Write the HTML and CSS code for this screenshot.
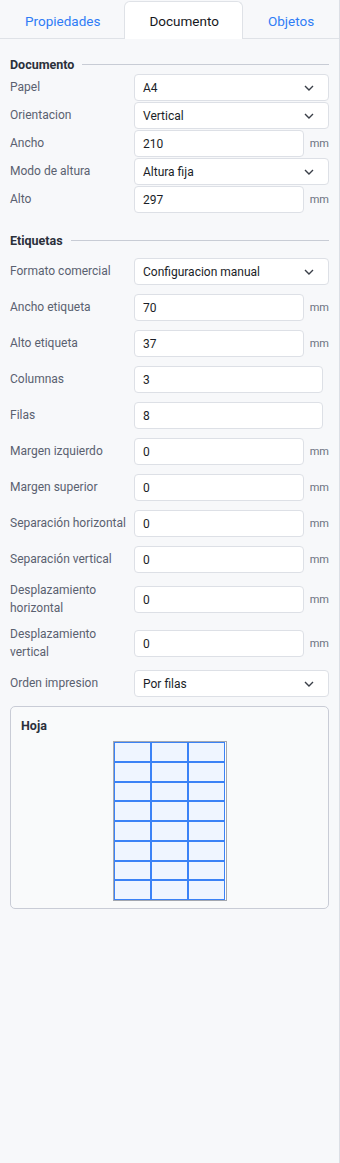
FILE: index.html
```html
<!DOCTYPE html>
<html lang="es">
  <head>
    <meta charset="UTF-8" />
    <meta name="viewport" content="width=device-width, initial-scale=1.0" />
    <title>Documento</title>
    <link rel="stylesheet" href="styles.css">
  </head>
  <body>
    <div class="panel">
      <nav class="tabs">
        <button class="tab">Propiedades</button>
        <button class="tab tab-active">Documento</button>
        <button class="tab">Objetos</button>
      </nav>

      <div class="content">
        <section class="group group-tight">
          <h2 class="group-title">Documento</h2>
          <div class="row">
            <label>Papel</label>
            <div class="select"><span>A4</span><svg viewBox="0 0 10 6" class="chevron"><path d="M1 1l4 4 4-4" /></svg></div>
          </div>
          <div class="row">
            <label>Orientacion</label>
            <div class="select"><span>Vertical</span><svg viewBox="0 0 10 6" class="chevron"><path d="M1 1l4 4 4-4" /></svg></div>
          </div>
          <div class="row">
            <label>Ancho</label>
            <input class="field" type="text" value="210" />
            <span class="unit">mm</span>
          </div>
          <div class="row">
            <label>Modo de altura</label>
            <div class="select"><span>Altura fija</span><svg viewBox="0 0 10 6" class="chevron"><path d="M1 1l4 4 4-4" /></svg></div>
          </div>
          <div class="row">
            <label>Alto</label>
            <input class="field" type="text" value="297" />
            <span class="unit">mm</span>
          </div>
        </section>

        <section class="group">
          <h2 class="group-title">Etiquetas</h2>
          <div class="row">
            <label>Formato comercial</label>
            <div class="select"><span>Configuracion manual</span><svg viewBox="0 0 10 6" class="chevron"><path d="M1 1l4 4 4-4" /></svg></div>
          </div>
          <div class="row">
            <label>Ancho etiqueta</label>
            <input class="field" type="text" value="70" />
            <span class="unit">mm</span>
          </div>
          <div class="row">
            <label>Alto etiqueta</label>
            <input class="field" type="text" value="37" />
            <span class="unit">mm</span>
          </div>
          <div class="row">
            <label>Columnas</label>
            <input class="field field-wide" type="text" value="3" />
          </div>
          <div class="row">
            <label>Filas</label>
            <input class="field field-wide" type="text" value="8" />
          </div>
          <div class="row">
            <label>Margen izquierdo</label>
            <input class="field" type="text" value="0" />
            <span class="unit">mm</span>
          </div>
          <div class="row">
            <label>Margen superior</label>
            <input class="field" type="text" value="0" />
            <span class="unit">mm</span>
          </div>
          <div class="row">
            <label>Separación horizontal</label>
            <input class="field" type="text" value="0" />
            <span class="unit">mm</span>
          </div>
          <div class="row">
            <label>Separación vertical</label>
            <input class="field" type="text" value="0" />
            <span class="unit">mm</span>
          </div>
          <div class="row">
            <label>Desplazamiento horizontal</label>
            <input class="field" type="text" value="0" />
            <span class="unit">mm</span>
          </div>
          <div class="row">
            <label>Desplazamiento vertical</label>
            <input class="field" type="text" value="0" />
            <span class="unit">mm</span>
          </div>
          <div class="row">
            <label>Orden impresion</label>
            <div class="select"><span>Por filas</span><svg viewBox="0 0 10 6" class="chevron"><path d="M1 1l4 4 4-4" /></svg></div>
          </div>

          <div class="preview">
            <h3 class="preview-title">Hoja</h3>
            <div class="sheet js-sheet"></div>
          </div>
        </section>
      </div>
    </div>

    <script>
      const sheet = document.querySelector(".js-sheet");
      const columns = 3;
      const rows = 8;
      for (let i = 0; i < columns * rows; i++) {
        const cell = document.createElement("div");
        cell.className = "sheet-cell";
        sheet.appendChild(cell);
      }
    </script>
  </body>
</html>
```

FILE: styles.css
```css
body {
  font-family: Roboto, "Noto Sans", sans-serif;
  background-color: #f7f8fa;
  color: #1f2430;
  margin: 0;
  padding: 0;
}
.panel {
  min-height: 1163px;
  border-right: 1px solid #dcdfe5;
  box-sizing: border-box;
}
.tabs {
  display: flex;
  height: 38px;
  border-bottom: 1px solid #dfe2e7;
}
.tab {
  font-family: inherit;
  font-size: 13.5px;
  color: #2f7cf6;
  background: none;
  border: 1px solid transparent;
  border-bottom: none;
  padding: 0 23px 0 24px;
  margin-top: 1px;
  height: 38px;
  cursor: pointer;
}
.tab-active {
  background-color: white;
  color: #16181d;
  border-color: #dfe2e7;
  border-radius: 6px 6px 0 0;
}

.content {
  padding: 17px 10px 10px 10px;
}
.group {
  display: flex;
  flex-direction: column;
  gap: 9px;
  margin-top: 19px;
}
.group-tight {
  gap: 1px;
  margin-top: 0;
}
.group-title {
  display: flex;
  align-items: center;
  gap: 8px;
  margin: 0;
  font-size: 12.5px;
  line-height: 17px;
  font-weight: bold;
  color: #2b303b;
}
.group-title::after {
  content: "";
  flex: 1;
  height: 1px;
  background-color: #c8ccd5;
}

.row {
  display: grid;
  grid-template-columns: 124px 1fr 25px;
  align-items: center;
}
.row label {
  font-size: 12px;
  line-height: 17.5px;
  color: #5a6170;
  padding-right: 8px;
}
.field,
.select {
  height: 27px;
  box-sizing: border-box;
  background-color: white;
  border: 1px solid #dde0e6;
  border-radius: 4px;
  font-family: inherit;
  font-size: 12px;
  color: #1a1e27;
  padding: 0 8px;
}
.field {
  grid-column: 2;
  width: 100%;
  outline: none;
}
.field-wide {
  grid-column: 2 / 4;
  width: auto;
  margin-right: 6px;
}
.select {
  grid-column: 2 / 4;
  display: flex;
  align-items: center;
  justify-content: space-between;
  padding-right: 14px;
}
.chevron {
  width: 10px;
  height: 6px;
  fill: none;
  stroke: #3a3f48;
  stroke-width: 1.4;
}
.unit {
  grid-column: 3;
  text-align: right;
  font-size: 11px;
  color: #6b7280;
}

.preview {
  border: 1px solid #c9ccd6;
  border-radius: 5px;
  background-color: #f9fafb;
  padding: 10px 10px 7px 10px;
}
.preview-title {
  margin: 0 0 7px 0;
  font-size: 12.5px;
  line-height: 17px;
  font-weight: bold;
  color: #2b303b;
}
.sheet {
  width: 114px;
  height: 160px;
  box-sizing: border-box;
  margin: 0 auto;
  border: 1px solid #a3a7b0;
  background-color: white;
  display: grid;
  grid-template-columns: repeat(3, 1fr);
  grid-template-rows: repeat(8, 1fr);
}
.sheet-cell {
  border: 1px solid #3b82f6;
  background-color: #eff5ff;
}
```
